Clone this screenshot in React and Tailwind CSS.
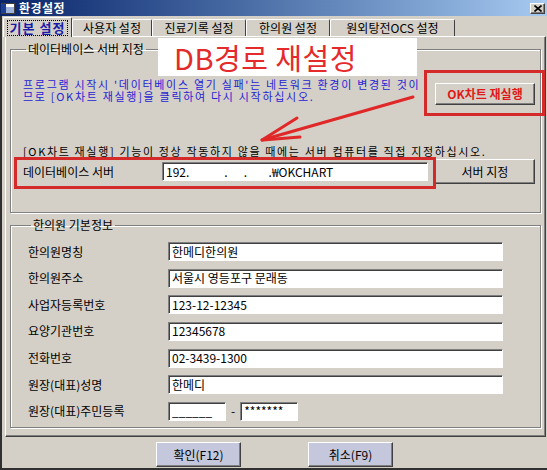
const sunken =
  'bg-white border border-t-[#808080] border-l-[#808080] border-b-white border-r-white shadow-[inset_1px_1px_0_#404040]'
const raised =
  'border border-t-white border-l-white border-b-[#404040] border-r-[#404040] shadow-[inset_-1px_-1px_0_#808080]'
const etched =
  'border border-[#808080] shadow-[1px_1px_0_white,inset_1px_1px_0_white]'

const infoRows = [
  ['한의원명칭', '한메디한의원'],
  ['한의원주소', '서울시 영등포구 문래동'],
  ['사업자등록번호', '123-12-12345'],
  ['요양기관번호', '12345678'],
  ['전화번호', '02-3439-1300'],
  ['원장(대표)성명', '한메디'],
]

function Tab({ label, w }) {
  return (
    <div
      className={`h-[17px] ${w} flex items-center justify-center border-t border-l border-t-white border-l-white border-r border-r-[#404040] rounded-t-[2px] text-[12px] leading-[14px] text-black`}
    >
      {label}
    </div>
  )
}

function Field({ value, className = '' }) {
  return (
    <div className={`${sunken} h-[19px] flex items-center pl-[3px] whitespace-pre text-[12px] leading-[14px] text-black ${className}`}>
      {value}
    </div>
  )
}

export default function App() {
  return (
    <div className="relative w-[547px] h-[470px] bg-[#d4d0c8] overflow-hidden font-['Noto_Sans_CJK_KR','Noto_Sans',sans-serif] select-none">
      {/* title bar */}
      <div className="h-[16px] flex items-center bg-gradient-to-r from-[#0a246a] to-[#a6caf0]">
        <div className="ml-[1px] w-[14px] h-[11px] bg-white border border-[#404040] flex">
          <div className="w-[4px] h-full bg-[#1c3f94]" />
          <div className="flex-1 mt-[3px] bg-[#9fb4dc]" />
        </div>
        <span className="ml-[4px] text-[12px] leading-[16px] font-bold tracking-[0.5px] text-white">환경설정</span>
        <div className={`ml-auto mr-[2px] w-[15px] h-[11px] bg-[#d4d0c8] ${raised} flex items-center justify-center`}>
          <svg width="8" height="7" viewBox="0 0 8 7">
            <path d="M0.5 0.5 L7.5 6.5 M7.5 0.5 L0.5 6.5" stroke="black" strokeWidth="1.6" />
          </svg>
        </div>
      </div>

      <div className="h-[454px] border-l-2 border-b-2 border-[#303030] flex flex-col">
        {/* tabs */}
        <div className="mt-[1px] h-[19px] flex items-end ml-[1px] relative z-10">
          <div className="h-[20px] w-[69px] -mb-[1px] bg-[#d4d0c8] flex items-center justify-center border-t border-l border-t-white border-l-white border-r border-r-[#404040] rounded-t-[2px]">
            <span className="px-[2px] border border-dotted border-black text-[13px] leading-[14px] font-bold text-[#1a1aa8] tracking-[1px]">
              기본 설정
            </span>
          </div>
          <Tab label="사용자 설정" w="w-[80px]" />
          <Tab label="진료기록 설정" w="w-[94px]" />
          <Tab label="한의원 설정" w="w-[84px]" />
          <Tab label="원외탕전OCS 설정" w="w-[125px]" />
        </div>

        {/* tab panel */}
        <div className="ml-[3px] w-[541px] h-[401px] border border-t-white border-l-white border-b-[#404040] border-r-[#404040] shadow-[inset_-1px_-1px_0_#808080] flex flex-col">
          <fieldset className={`${etched} mt-[5px] mx-[4px] h-[171px] pl-[12px] pr-[5px]`}>
            <legend className="ml-[3px] px-[2px] text-[12px] leading-[14px] text-black">
              데이터베이스 서버 지정
            </legend>
            <div className="h-[89px] flex items-start">
              <div className="mt-[22px] flex flex-col text-[11px] leading-[12px] tracking-[1.7px] text-[#2424d4]">
                <span>프로그램 시작시 '데이터베이스 열기 실패'는 네트워크 환경이 변경된 것이</span>
                <span>므로 [OK차트 재실행]을 클릭하여 다시 시작하십시오.</span>
              </div>
              <button
                className={`mt-[27px] ml-auto w-[100px] h-[22px] bg-[#d4d0c8] ${raised} text-[12px] leading-[14px] font-bold text-[#e01818] shrink-0`}
              >
                OK차트 재실행
              </button>
            </div>
            <p className="text-[11px] leading-[12px] tracking-[1.65px] text-black whitespace-nowrap">
              [OK차트 재실행] 기능이 정상 작동하지 않을 때에는 서버 컴퓨터를 직접 지정하십시오.
            </p>
            <div className="mt-[2px] h-[25px] flex items-center">
              <span className="w-[139px] text-[12px] leading-[14px] text-black">데이터베이스 서버</span>
              <Field value="192.             .      .        .₩OKCHART" className="w-[266px]" />
              <button
                className={`ml-[7px] w-[100px] h-[25px] bg-[#d4d0c8] ${raised} text-[12px] leading-[14px] text-black`}
              >
                서버 지정
              </button>
            </div>
          </fieldset>

          <fieldset className={`${etched} mt-[5px] mx-[4px] h-[210px] pl-[17px]`}>
            <legend className="ml-[3px] px-[2px] text-[12px] leading-[14px] text-black">
              한의원 기본정보
            </legend>
            <div className="mt-[10px] flex flex-col gap-[7.67px]">
              {infoRows.map(([label, value]) => (
                <div key={label} className="flex items-center h-[19px]">
                  <span className="w-[140px] text-[12px] leading-[14px] text-black">{label}</span>
                  <Field value={value} className="w-[335px]" />
                </div>
              ))}
              <div className="flex items-center h-[19px]">
                <span className="w-[140px] text-[12px] leading-[14px] text-black">원장(대표)주민등록</span>
                <Field value="______" className="w-[58px]" />
                <span className="mx-[5px] text-[12px] leading-[14px] text-black">-</span>
                <Field value="*******" className="w-[58px] text-[11px]" />
              </div>
            </div>
          </fieldset>
        </div>

        {/* bottom buttons */}
        <div className="mt-[5px] flex justify-center gap-[67px]">
          <button className={`w-[85px] h-[25px] bg-[#c5c8dc] ${raised} text-[12px] leading-[14px] text-black`}>
            확인(F12)
          </button>
          <button className={`w-[85px] h-[25px] bg-[#c5c8dc] ${raised} text-[12px] leading-[14px] text-black`}>
            취소(F9)
          </button>
        </div>
      </div>

      {/* annotation overlays */}
      <div className="absolute left-[158px] top-[38px] w-[259px] h-[38px] bg-white flex items-center pl-[16px]">
        <span className="text-[29px] leading-[30px] tracking-[0.5px] text-[#e42a2a]">DB경로 재설정</span>
      </div>
      <div className="absolute left-[424px] top-[70px] w-[121px] h-[46px] border-[3px] border-[#d42a2a]" />
      <div className="absolute left-[14px] top-[157px] w-[422px] h-[32px] border-[3px] border-[#d42a2a]" />
      <svg className="absolute left-0 top-0 pointer-events-none" width="547" height="470">
        <g stroke="#e02828" strokeWidth="3" strokeLinecap="round" fill="none">
          <path d="M413 97 L262 140" />
          <path d="M262 140 L297 118" />
          <path d="M263 140 L300 137" />
        </g>
      </svg>
    </div>
  )
}
